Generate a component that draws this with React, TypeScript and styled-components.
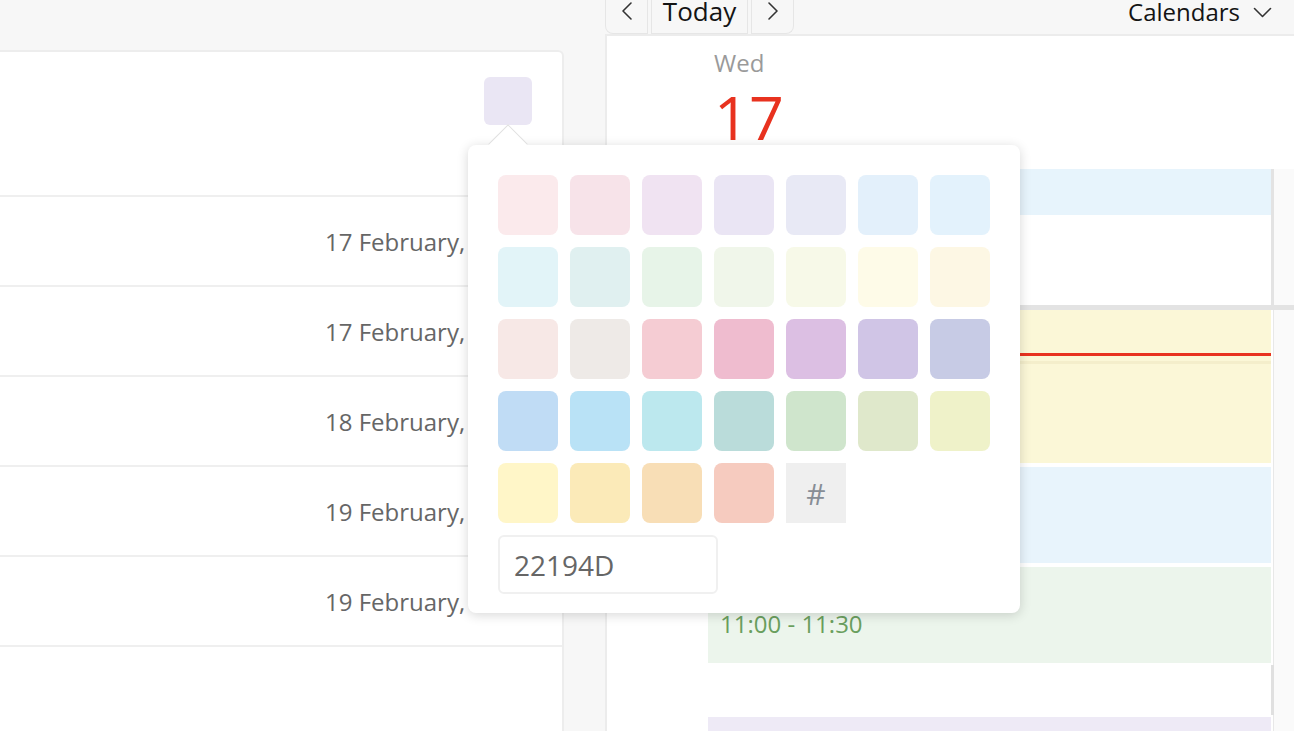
import React from "react";
import styled, { createGlobalStyle } from "styled-components";

const GlobalStyle = createGlobalStyle`
  html, body {
    margin: 0;
    padding: 0;
    background: #f7f7f7;
    font-family: "Open Sans", "Noto Sans", Arial, sans-serif;
    overflow: hidden;
  }
  * { box-sizing: border-box; }
`;

const Page = styled.div`
  display: flex;
  height: 731px;
  overflow: hidden;
  background: #f7f7f7;
`;

const LeftColumn = styled.div`
  width: 564px;
  flex-shrink: 0;
  padding-top: 50px;
`;

const ListCard = styled.div`
  background: #fff;
  border: 2px solid #ededed;
  border-left: none;
  border-bottom: none;
  border-top-right-radius: 6px;
  height: 100%;
`;

const CardHeader = styled.div`
  height: 143px;
  display: flex;
  justify-content: flex-end;
  align-items: flex-start;
  padding: 25px 30px 0 0;
`;

const SwatchAnchor = styled.div`
  position: relative;
`;

const SwatchButton = styled.div<{ $color: string }>`
  width: 48px;
  height: 48px;
  border-radius: 6px;
  background: ${(p) => p.$color};
`;

const RowList = styled.div`
  border-bottom: 2px solid #efefef;
`;

const Row = styled.div`
  height: 90px;
  border-top: 2px solid #efefef;
  display: flex;
  align-items: center;
  justify-content: flex-end;
`;

const DateCell = styled.div`
  width: 237px;
  font-size: 24px;
  color: #666;
  white-space: nowrap;
`;

const ColumnGap = styled.div`
  width: 41px;
  flex-shrink: 0;
`;

const RightColumn = styled.div`
  flex: 1;
  display: flex;
  flex-direction: column;
  min-width: 0;
`;

const Toolbar = styled.div`
  height: 34px;
  display: flex;
  align-items: flex-start;
  justify-content: space-between;
`;

const NavGroup = styled.div`
  display: flex;
  gap: 3px;
`;

const NavButton = styled.div<{ $w: number; $corner?: "left" | "right" }>`
  width: ${(p) => p.$w}px;
  height: 34px;
  border: 1px solid #e6e6e6;
  border-top: none;
  background: #f7f7f7;
  display: flex;
  align-items: center;
  justify-content: center;
  font-size: 26px;
  color: #141414;
  line-height: 1;
  padding-bottom: 12px;
  border-bottom-left-radius: ${(p) => (p.$corner === "left" ? "8px" : "0")};
  border-bottom-right-radius: ${(p) => (p.$corner === "right" ? "8px" : "0")};
`;

const CalendarsMenu = styled.div`
  display: flex;
  align-items: center;
  gap: 13px;
  padding-right: 22px;
  font-size: 24px;
  line-height: 24px;
  color: #141414;
  height: 24px;
`;

const CalendarPanel = styled.div`
  flex: 1;
  background: #fff;
  border-top: 2px solid #ececec;
  border-left: 2px solid #ececec;
  display: flex;
  flex-direction: column;
`;

const DayHeader = styled.div`
  height: 133px;
  padding: 11px 0 0 107px;
  display: flex;
  flex-direction: column;
`;

const DayName = styled.div`
  font-size: 24px;
  line-height: 32px;
  color: #9a9a9a;
`;

const DayNumber = styled.div`
  font-size: 61px;
  line-height: 62px;
  margin-top: 7px;
  color: #e8321f;
`;

const Lane = styled.div<{ $h?: number }>`
  display: grid;
  grid-template-columns: 101px 1fr 3px 20px;
  ${(p) => (p.$h ? `height: ${p.$h}px;` : "flex: 1;")}
`;

const Gutter = styled.div``;

const DayColumn = styled.div`
  position: relative;
  display: flex;
  flex-direction: column;
  gap: 4px;
`;

const ScrollStrip = styled.div<{ $tone: "dark" | "light" }>`
  background: ${(p) => (p.$tone === "dark" ? "#e3e3e3" : "#fff")};
  box-shadow: ${(p) => (p.$tone === "light" ? "inset -1px 0 #e8e8e8" : "none")};
  display: flex;
  flex-direction: column;
`;

const ScrollThumb = styled.div`
  margin-top: 355px;
  height: 50px;
  background: #e0e0e0;
`;

const ScrollTrack = styled.div`
  background: #fafafa;
`;

const AllDayBar = styled.div`
  height: 46px;
  background: #e7f4fc;
`;

const Separator = styled.div`
  height: 5px;
  background: #e3e3e3;
`;

const Event = styled.div<{ $bg: string; $h: number; $color: string; $mt?: number; $pt?: number }>`
  height: ${(p) => p.$h}px;
  flex-shrink: 0;
  margin-top: ${(p) => p.$mt ?? 0}px;
  background: ${(p) => p.$bg};
  color: ${(p) => p.$color};
  padding: ${(p) => p.$pt ?? 10}px 12px 0;
  font-size: 24px;
  line-height: 32px;
  position: relative;
  overflow: hidden;
`;

const HourLine = styled.div`
  position: absolute;
  left: 0;
  right: 0;
  top: 51px;
  height: 3px;
  background: #f4eecb;
`;

const NowLine = styled.div`
  position: absolute;
  left: 0;
  right: 0;
  top: 43px;
  height: 3px;
  background: #e8321f;
  z-index: 2;
`;

const Popover = styled.div`
  position: absolute;
  left: -16px;
  top: 68px;
  width: 552px;
  height: 468px;
  padding: 30px 30px 19px;
  background: #fff;
  border-radius: 8px;
  box-shadow: 0 2px 12px rgba(0, 0, 0, 0.16);
  z-index: 10;
  display: flex;
  flex-direction: column;
  gap: 12px;
`;

const Arrow = styled.div`
  position: absolute;
  left: 26px;
  top: -15px;
  width: 28px;
  height: 28px;
  background: #fff;
  border-top: 1px solid #e0e0e0;
  border-left: 1px solid #e0e0e0;
  transform: rotate(45deg);
`;

const SwatchGrid = styled.div`
  display: grid;
  grid-template-columns: repeat(7, 60px);
  grid-auto-rows: 60px;
  gap: 12px;
  position: relative;
`;

const Swatch = styled.div<{ $color: string }>`
  border-radius: 8px;
  background: ${(p) => p.$color};
`;

const HashTile = styled.div`
  background: #efefef;
  display: flex;
  align-items: center;
  justify-content: center;
  color: #878d95;
  font-size: 30px;
`;

const HexInput = styled.div`
  width: 220px;
  height: 59px;
  border: 2px solid #f0f0f0;
  border-radius: 6px;
  padding-left: 14px;
  display: flex;
  align-items: center;
  font-size: 28px;
  color: #666;
`;

const swatches = [
  "#fbeaec", "#f7e3e9", "#f0e3f2", "#eae5f4", "#e8e9f5", "#e3f0fb", "#e3f2fc",
  "#e2f4f8", "#e0f0f0", "#e7f4e8", "#f0f6ea", "#f7f9e8", "#fefbe8", "#fdf7e4",
  "#f7e8e6", "#eeeae7", "#f5ccd3", "#efbccf", "#dcbfe3", "#d0c5e6", "#c7cbe5",
  "#c0dcf5", "#b9e2f6", "#bce8ee", "#badcda", "#cfe5cc", "#dfe8cb", "#eff2c9",
  "#fff6c8", "#fbeab8", "#f8deb6", "#f6cbbf",
];

const dates = [
  "17 February, 2021",
  "17 February, 2021",
  "18 February, 2021",
  "19 February, 2021",
  "19 February, 2021",
];

const ChevronLeft = () => (
  <svg width="14" height="20" viewBox="0 0 14 20" fill="none">
    <polyline points="11,2 3,10 11,18" stroke="#333" strokeWidth="1.6" strokeLinecap="round" strokeLinejoin="round" />
  </svg>
);

const ChevronRight = () => (
  <svg width="14" height="20" viewBox="0 0 14 20" fill="none">
    <polyline points="3,2 11,10 3,18" stroke="#333" strokeWidth="1.6" strokeLinecap="round" strokeLinejoin="round" />
  </svg>
);

const ChevronDown = () => (
  <svg width="19" height="11" viewBox="0 0 19 11" fill="none">
    <polyline points="1.5,1.5 9.5,9.5 17.5,1.5" stroke="#333" strokeWidth="1.6" strokeLinecap="round" strokeLinejoin="round" />
  </svg>
);

export default function App() {
  return (
    <>
      <GlobalStyle />
      <Page>
        <LeftColumn>
          <ListCard>
            <CardHeader>
              <SwatchAnchor>
                <SwatchButton $color="#eae6f4" />
                <Popover>
                  <Arrow />
                  <SwatchGrid>
                    {swatches.map((c, i) => (
                      <Swatch key={i} $color={c} />
                    ))}
                    <HashTile>#</HashTile>
                  </SwatchGrid>
                  <HexInput>22194D</HexInput>
                </Popover>
              </SwatchAnchor>
            </CardHeader>
            <RowList>
              {dates.map((d, i) => (
                <Row key={i}>
                  <DateCell>{d}</DateCell>
                </Row>
              ))}
            </RowList>
          </ListCard>
        </LeftColumn>
        <ColumnGap />
        <RightColumn>
          <Toolbar>
            <NavGroup>
              <NavButton $w={43} $corner="left">
                <ChevronLeft />
              </NavButton>
              <NavButton $w={97}>Today</NavButton>
              <NavButton $w={43} $corner="right">
                <ChevronRight />
              </NavButton>
            </NavGroup>
            <CalendarsMenu>
              Calendars
              <ChevronDown />
            </CalendarsMenu>
          </Toolbar>
          <CalendarPanel>
            <DayHeader>
              <DayName>Wed</DayName>
              <DayNumber>17</DayNumber>
            </DayHeader>
            <Lane $h={136}>
              <Gutter />
              <DayColumn>
                <AllDayBar />
              </DayColumn>
              <ScrollStrip $tone="dark" />
              <ScrollTrack />
            </Lane>
            <Separator />
            <Lane>
              <Gutter />
              <DayColumn>
                <NowLine />
                <Event $bg="#fbf7d7" $h={153} $color="#a8962e">
                  <HourLine />
                </Event>
                <Event $bg="#e8f4fc" $h={96} $color="#4a8ac0" />
                <Event $bg="#ecf5ec" $h={96} $color="#6a9f5e" $pt={41}>
                  11:00 - 11:30
                </Event>
                <Event $bg="#eeeaf6" $h={100} $color="#8f84cf" $mt={50} $pt={8}>
                  Review meeting
                </Event>
              </DayColumn>
              <ScrollStrip $tone="light">
                <ScrollThumb />
              </ScrollStrip>
              <ScrollTrack />
            </Lane>
          </CalendarPanel>
        </RightColumn>
      </Page>
    </>
  );
}
